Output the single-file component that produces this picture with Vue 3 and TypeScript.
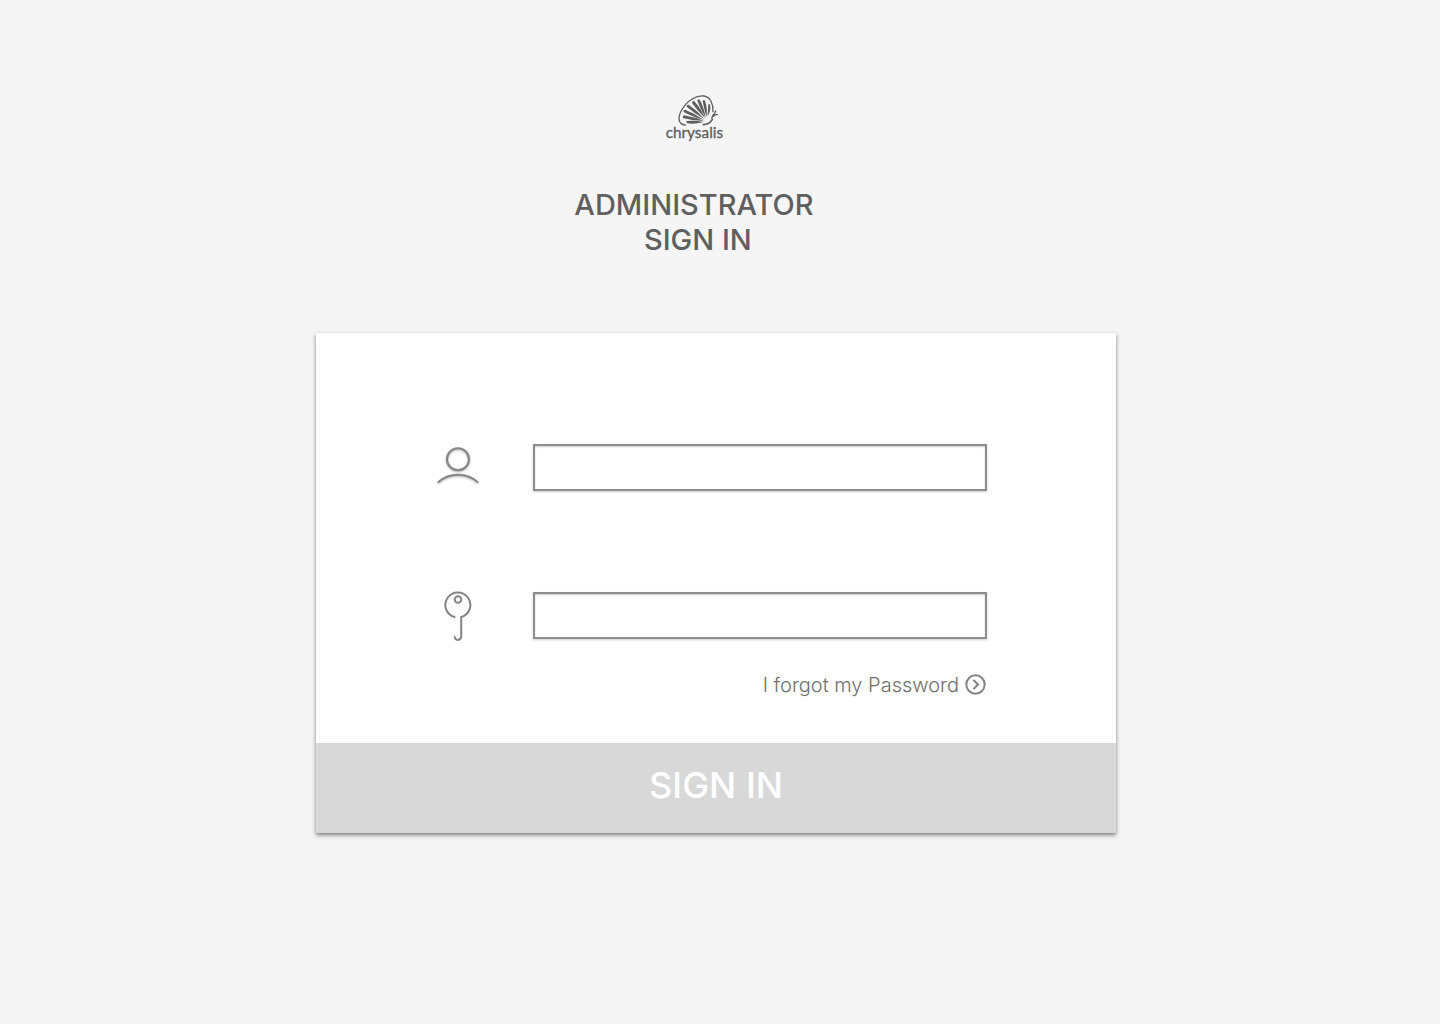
<script setup lang="ts">
import { ref } from 'vue'

const username = ref('')
const password = ref('')

const petals: string[] = [
  'M143 102 Q112 110 92 105 Q88 101 93 99 Q118 97 143 102Z',
  'M143 99 Q106 97 81 90 Q78 84 84 82 Q116 87 143 99Z',
  'M144 96 Q108 86 83 72 Q81 65 88 65 Q118 77 144 96Z',
  'M145 93 Q114 75 92 56 Q92 49 98 50 Q125 68 145 93Z',
  'M147 91 Q123 67 108 45 Q108 38 114 39 Q136 62 147 91Z',
  'M149 89 Q132 60 124 38 Q126 32 131 35 Q145 60 149 89Z',
  'M152 87 Q143 60 140 39 Q143 33 147 38 Q155 60 152 87Z',
  'M155 85 Q156 64 157 49 Q161 46 163 53 Q164 71 155 85Z',
]
</script>

<template>
  <main class="page">
    <header class="header">
      <svg class="logo" viewBox="0 0 228 180" role="img" aria-label="chrysalis">
        <path class="wing" d="M88 111 C64 109 66 85 77 66 C94 37 122 21 144 24 C163 27 172 47 171 71" />
        <path class="tail" d="M142 110 Q161 109 169 94" />
        <path v-for="petal in petals" :key="petal" class="petal" :d="petal" />
        <path class="antenna" d="M167 90 L174 80 L179 69 M174 82 L184 79" />
        <circle class="petal" cx="173" cy="82" r="4" />
        <text class="wordmark" x="29" y="149">chrysalis</text>
      </svg>
      <h1 class="title">ADMINISTRATOR<br />&nbsp;SIGN IN</h1>
    </header>

    <form class="card" @submit.prevent>
      <div class="fields">
        <div class="field">
          <label for="username" aria-label="Username">
            <svg class="icon shaded" viewBox="0 0 44 52">
              <circle cx="22" cy="18.3" r="11" />
              <path d="M2.5 41 A30 30 0 0 1 41.5 41" />
            </svg>
          </label>
          <input id="username" v-model="username" type="text" autocomplete="username" />
        </div>
        <div class="field">
          <label for="password" aria-label="Password">
            <svg class="icon" viewBox="0 0 44 52">
              <path d="M18.5 28 A12.5 12.5 0 1 1 25.2 28 V47 C25.2 52 19 52 18.8 48" />
              <circle cx="22" cy="10.5" r="3.3" />
            </svg>
          </label>
          <input id="password" v-model="password" type="password" autocomplete="current-password" />
        </div>
        <a class="forgot" href="#">
          I forgot my Password
          <svg class="arrow" viewBox="0 0 22 22" aria-hidden="true">
            <circle cx="10.5" cy="10.5" r="9.2" />
            <path d="M9 6.5 L13 10.5 L9 14.5" />
          </svg>
        </a>
      </div>
      <button class="submit" type="submit">SIGN IN</button>
    </form>
  </main>
</template>

<style>
body {
  margin: 0;
  background: #f5f5f5;
}
</style>

<style scoped>
.page {
  box-sizing: border-box;
  display: flex;
  flex-direction: column;
  align-items: center;
  min-height: 100vh;
  padding: 88px 8px 88px 0;
  background: #f5f5f5;
  color: #5f5f5f;
  font-family: 'Inter', 'Liberation Sans', sans-serif;
}

.header {
  display: flex;
  flex-direction: column;
  align-items: center;
  padding-right: 44px;
}

.logo {
  width: 76px;
  height: 60px;
}

.wing,
.tail,
.antenna {
  fill: none;
  stroke: #5f5f5f;
  stroke-width: 4;
  stroke-linecap: round;
}

.tail {
  stroke-width: 5;
}

.petal {
  fill: #5f5f5f;
}

.wordmark {
  fill: #5f5f5f;
  stroke: #5f5f5f;
  stroke-width: 1;
  font-family: 'Lato', sans-serif;
  font-size: 46px;
}

.title {
  margin: 39px 0 76px;
  font-size: 29px;
  font-weight: 500;
  line-height: 35px;
  text-align: center;
}

.card {
  width: 100%;
  max-width: 800px;
  background: #fff;
  box-shadow: 0 2px 4px rgba(0, 0, 0, 0.5);
}

.fields {
  display: flex;
  flex-direction: column;
  padding: 108px 129px 46px 120px;
}

.field {
  display: flex;
  align-items: center;
  gap: 53px;
  margin-bottom: 96px;
}

.field + .field {
  margin-bottom: 32px;
}

.field label,
.icon {
  display: block;
  flex: none;
  width: 44px;
  height: 52px;
}

.icon,
.arrow {
  fill: none;
  stroke: #868484;
  stroke-width: 2;
  stroke-linecap: round;
}

.shaded {
  filter: drop-shadow(0 1px 1px rgba(0, 0, 0, 0.3));
}

.field input {
  box-sizing: border-box;
  flex: 1;
  min-width: 0;
  height: 47px;
  padding: 0 12px;
  border: 2px solid #8f8d8d;
  border-radius: 0;
  outline: none;
  background: #fff;
  box-shadow: 0 1px 2px rgba(0, 0, 0, 0.2), inset 0 1px 2px rgba(0, 0, 0, 0.2);
  color: #5f5f5f;
  font: inherit;
  font-size: 20px;
}

.forgot {
  display: flex;
  align-items: center;
  align-self: flex-end;
  gap: 6px;
  color: #707070;
  font-size: 20px;
  font-weight: 300;
  line-height: 24px;
  text-decoration: none;
}

.arrow {
  width: 22px;
  height: 22px;
}

.submit {
  display: block;
  width: 100%;
  height: 90px;
  padding: 0 0 6px;
  border: 0;
  background: #d8d8d8;
  color: #fff;
  font-family: inherit;
  font-size: 36px;
  font-weight: 500;
}
</style>
